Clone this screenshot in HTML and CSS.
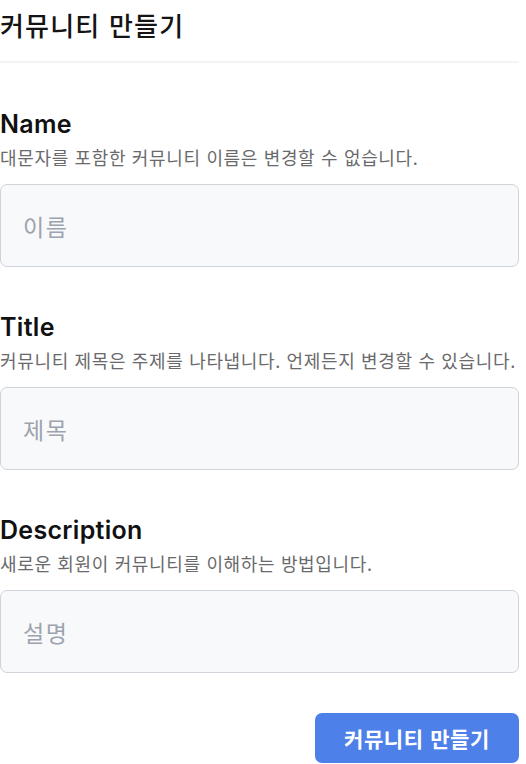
FILE: index.html
```html
<!DOCTYPE html>
<html lang="ko">
<head>
<meta charset="utf-8">
<link rel="stylesheet" href="styles.css">
</head>
<body>
<div class="page">
  <header class="header">
    <h1 class="title">커뮤니티 만들기</h1>
  </header>
  <form class="form">
    <div class="field">
      <label class="label">Name</label>
      <p class="hint">대문자를 포함한 커뮤니티 이름은 변경할 수 없습니다.</p>
      <input class="input" type="text" placeholder="이름">
    </div>
    <div class="field">
      <label class="label">Title</label>
      <p class="hint">커뮤니티 제목은 주제를 나타냅니다. 언제든지 변경할 수 있습니다.</p>
      <input class="input" type="text" placeholder="제목">
    </div>
    <div class="field">
      <label class="label">Description</label>
      <p class="hint">새로운 회원이 커뮤니티를 이해하는 방법입니다.</p>
      <input class="input" type="text" placeholder="설명">
    </div>
    <div class="actions">
      <button class="btn" type="button">커뮤니티 만들기</button>
    </div>
  </form>
</div>
</body>
</html>
```

FILE: styles.css
```css
* { box-sizing: border-box; }
html, body { margin: 0; padding: 0; background: #ffffff; }
body {
  font-family: Inter, "Noto Sans CJK KR", sans-serif;
  color: #111111;
}
.page {
  width: 519px;
  display: flex;
  flex-direction: column;
}
.header {
  height: 63px;
  border-bottom: 2px solid #f3f4f6;
  display: flex;
  align-items: flex-start;
}
.title {
  margin: 0;
  padding-top: 7px;
  font-family: "Noto Sans CJK KR", sans-serif;
  font-size: 26px;
  letter-spacing: 1.2px;
  line-height: 36px;
  font-weight: 500;
  color: #141414;
}
.form {
  padding-top: 47px;
  display: flex;
  flex-direction: column;
  gap: 46px;
}
.field {
  display: flex;
  flex-direction: column;
}
.label {
  font-family: Inter, "Noto Sans CJK KR", sans-serif;
  font-size: 25px;
  letter-spacing: 0.3px;
  line-height: 28px;
  font-weight: 600;
  color: #111111;
}
.hint {
  margin: 7px 0 0;
  font-family: "Noto Sans CJK KR", sans-serif;
  font-size: 18px;
  letter-spacing: 0.65px;
  line-height: 24px;
  color: #6a6a6c;
  white-space: nowrap;
}
.input {
  margin-top: 15px;
  height: 83px;
  width: 100%;
  border: 1px solid #cfd3da;
  border-radius: 7px;
  background: #f8f9fa;
  padding: 0 22px;
  font-family: "Noto Sans CJK KR", sans-serif;
  font-size: 23px;
  letter-spacing: 1.5px;
  color: #111;
  outline: none;
}
.input::placeholder { color: #9ca3af; }
.actions {
  display: flex;
  justify-content: flex-end;
  margin-top: -6px;
}
.btn {
  width: 204px;
  height: 50px;
  border: none;
  border-radius: 7px;
  background: #4d80e8;
  color: #ffffff;
  font-family: "Noto Sans CJK KR", sans-serif;
  font-size: 21px;
  letter-spacing: 0.6px;
  font-weight: 700;
  cursor: pointer;
}
```
